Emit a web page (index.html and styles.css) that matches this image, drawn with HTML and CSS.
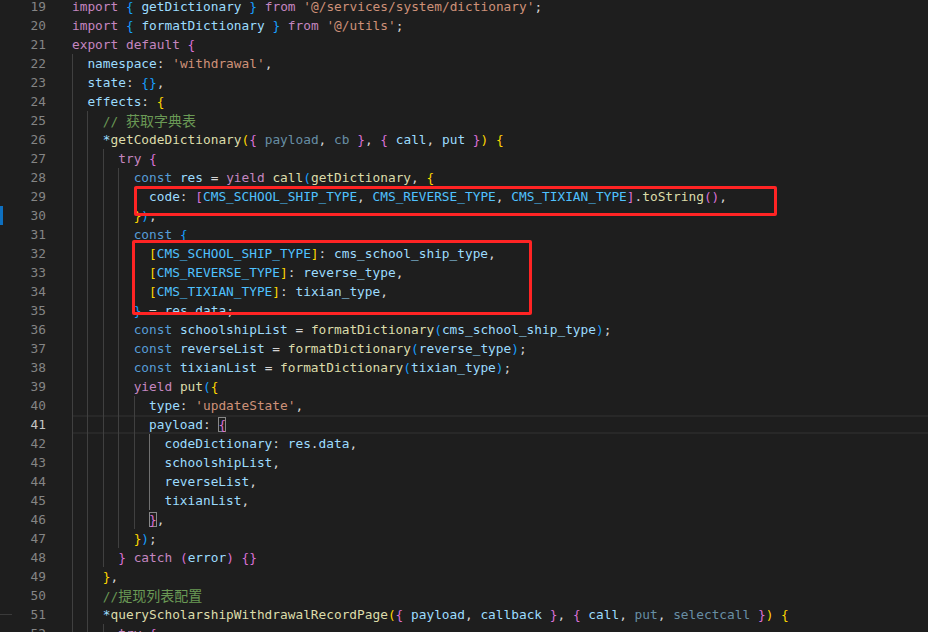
FILE: index.html
```html
<!DOCTYPE html>
<html lang="zh">
<head>
    <meta charset="UTF-8">
    <title>withdrawal.js</title>
    <link rel="stylesheet" href="styles.css">
</head>
<body>
    <div class="editor">
        <div class="strip">
            <div class="mark"></div>
            <div class="rule"></div>
        </div>

        <div class="gutter">
            <div>19</div><div>20</div><div>21</div><div>22</div><div>23</div><div>24</div>
            <div>25</div><div>26</div><div>27</div><div>28</div><div>29</div><div>30</div>
            <div>31</div><div>32</div><div>33</div><div>34</div><div>35</div><div>36</div>
            <div>37</div><div>38</div><div>39</div><div>40</div><div class="active">41</div><div>42</div>
            <div>43</div><div>44</div><div>45</div><div>46</div><div>47</div><div>48</div>
            <div>49</div><div>50</div><div>51</div><div>52</div>
        </div>

        <div class="code">
<div class="ln"><span class="k">import</span> <span class="b3">{</span> <span class="v">getDictionary</span> <span class="b3">}</span> <span class="k">from</span> <span class="st">'@/services/system/dictionary'</span>;</div>
<div class="ln"><span class="k">import</span> <span class="b3">{</span> <span class="v">formatDictionary</span> <span class="b3">}</span> <span class="k">from</span> <span class="st">'@/utils'</span>;</div>
<div class="ln"><span class="k">export</span> <span class="k">default</span> <span class="b2">{</span></div>
<div class="ln"><i class="ig"></i><span class="v">namespace</span>: <span class="st">'withdrawal'</span>,</div>
<div class="ln"><i class="ig"></i><span class="v">state</span>: <span class="b3">{}</span>,</div>
<div class="ln"><i class="ig"></i><span class="v">effects</span>: <span class="b1">{</span></div>
<div class="ln"><i class="ig"></i><i class="ig"></i><span class="cm">// <span class="zh">获取字典表</span></span></div>
<div class="ln"><i class="ig"></i><i class="ig"></i><span class="v">*</span><span class="f">getCodeDictionary</span><span class="b1">(</span><span class="b2">{</span> <span class="u">payload</span>, <span class="u">cb</span> <span class="b2">}</span>, <span class="b2">{</span> <span class="v">call</span>, <span class="v">put</span> <span class="b2">}</span><span class="b1">)</span> <span class="b1">{</span></div>
<div class="ln"><i class="ig"></i><i class="ig"></i><i class="ig"></i><span class="k">try</span> <span class="b2">{</span></div>
<div class="ln"><i class="ig"></i><i class="ig"></i><i class="ig"></i><i class="ig"></i><span class="s">const</span> <span class="v">res</span> = <span class="k">yield</span> <span class="f">call</span><span class="b3">(</span><span class="f">getDictionary</span>, <span class="b1">{</span></div>
<div class="ln"><i class="ig"></i><i class="ig"></i><i class="ig"></i><i class="ig"></i><i class="ig"></i><span class="v">code</span>: <span class="b2">[</span><span class="cn">CMS_SCHOOL_SHIP_TYPE</span>, <span class="cn">CMS_REVERSE_TYPE</span>, <span class="cn">CMS_TIXIAN_TYPE</span><span class="b2">]</span>.<span class="f">toString</span><span class="b2">()</span>,</div>
<div class="ln"><i class="ig"></i><i class="ig"></i><i class="ig"></i><i class="ig"></i><span class="b1">}</span><span class="b3">)</span>;</div>
<div class="ln"><i class="ig"></i><i class="ig"></i><i class="ig"></i><i class="ig"></i><span class="s">const</span> <span class="b3">{</span></div>
<div class="ln"><i class="ig"></i><i class="ig"></i><i class="ig"></i><i class="ig"></i><i class="ig"></i><span class="b1">[</span><span class="cn">CMS_SCHOOL_SHIP_TYPE</span><span class="b1">]</span>: <span class="v">cms_school_ship_type</span>,</div>
<div class="ln"><i class="ig"></i><i class="ig"></i><i class="ig"></i><i class="ig"></i><i class="ig"></i><span class="b1">[</span><span class="cn">CMS_REVERSE_TYPE</span><span class="b1">]</span>: <span class="v">reverse_type</span>,</div>
<div class="ln"><i class="ig"></i><i class="ig"></i><i class="ig"></i><i class="ig"></i><i class="ig"></i><span class="b1">[</span><span class="cn">CMS_TIXIAN_TYPE</span><span class="b1">]</span>: <span class="v">tixian_type</span>,</div>
<div class="ln"><i class="ig"></i><i class="ig"></i><i class="ig"></i><i class="ig"></i><span class="b3">}</span> = <span class="v">res</span>.<span class="v">data</span>;</div>
<div class="ln"><i class="ig"></i><i class="ig"></i><i class="ig"></i><i class="ig"></i><span class="s">const</span> <span class="v">schoolshipList</span> = <span class="f">formatDictionary</span><span class="b3">(</span><span class="v">cms_school_ship_type</span><span class="b3">)</span>;</div>
<div class="ln"><i class="ig"></i><i class="ig"></i><i class="ig"></i><i class="ig"></i><span class="s">const</span> <span class="v">reverseList</span> = <span class="f">formatDictionary</span><span class="b3">(</span><span class="v">reverse_type</span><span class="b3">)</span>;</div>
<div class="ln"><i class="ig"></i><i class="ig"></i><i class="ig"></i><i class="ig"></i><span class="s">const</span> <span class="v">tixianList</span> = <span class="f">formatDictionary</span><span class="b3">(</span><span class="v">tixian_type</span><span class="b3">)</span>;</div>
<div class="ln"><i class="ig"></i><i class="ig"></i><i class="ig"></i><i class="ig"></i><span class="k">yield</span> <span class="f">put</span><span class="b3">(</span><span class="b1">{</span></div>
<div class="ln"><i class="ig"></i><i class="ig"></i><i class="ig"></i><i class="ig"></i><i class="ig"></i><span class="v">type</span>: <span class="st">'updateState'</span>,</div>
<div class="ln current"><i class="ig"></i><i class="ig"></i><i class="ig"></i><i class="ig"></i><i class="ig"></i><span class="v">payload</span>: <span class="b2 match">{</span></div>
<div class="ln"><i class="ig"></i><i class="ig"></i><i class="ig"></i><i class="ig"></i><i class="ig"></i><i class="ig on"></i><span class="v">codeDictionary</span>: <span class="v">res</span>.<span class="v">data</span>,</div>
<div class="ln"><i class="ig"></i><i class="ig"></i><i class="ig"></i><i class="ig"></i><i class="ig"></i><i class="ig on"></i><span class="v">schoolshipList</span>,</div>
<div class="ln"><i class="ig"></i><i class="ig"></i><i class="ig"></i><i class="ig"></i><i class="ig"></i><i class="ig on"></i><span class="v">reverseList</span>,</div>
<div class="ln"><i class="ig"></i><i class="ig"></i><i class="ig"></i><i class="ig"></i><i class="ig"></i><i class="ig on"></i><span class="v">tixianList</span>,</div>
<div class="ln"><i class="ig"></i><i class="ig"></i><i class="ig"></i><i class="ig"></i><i class="ig"></i><span class="b2 match">}</span>,</div>
<div class="ln"><i class="ig"></i><i class="ig"></i><i class="ig"></i><i class="ig"></i><span class="b1">}</span><span class="b3">)</span>;</div>
<div class="ln"><i class="ig"></i><i class="ig"></i><i class="ig"></i><span class="b2">}</span> <span class="k">catch</span> <span class="b2">(</span><span class="v">error</span><span class="b2">)</span> <span class="b2">{}</span></div>
<div class="ln"><i class="ig"></i><i class="ig"></i><span class="b1">}</span>,</div>
<div class="ln"><i class="ig"></i><i class="ig"></i><span class="cm">//<span class="zh">提现列表配置</span></span></div>
<div class="ln"><i class="ig"></i><i class="ig"></i><span class="v">*</span><span class="f">queryScholarshipWithdrawalRecordPage</span><span class="b1">(</span><span class="b2">{</span> <span class="v">payload</span>, <span class="v">callback</span> <span class="b2">}</span>, <span class="b2">{</span> <span class="v">call</span>, <span class="u">put</span>, <span class="u">selectcall</span> <span class="b2">}</span><span class="b1">)</span> <span class="b1">{</span></div>
<div class="ln"><i class="ig"></i><i class="ig"></i><i class="ig"></i><span class="k">try</span> <span class="b2">{</span></div>
        </div>
    </div>

    <!-- red annotation boxes drawn over the code -->
    <div class="note note-code"></div>
    <div class="note note-const"></div>
</body>
</html>
```

FILE: styles.css
```css
* {
    margin: 0;
    padding: 0;
    box-sizing: border-box;
}

html, body {
    width: 100%;
    height: 100%;
    background: #1e1e1e;
    overflow: hidden;
}

body {
    position: relative;
    font-family: "DejaVu Sans Mono", "Liberation Mono", monospace;
    font-size: 12.8px;
    color: #d4d4d4;
}

/* 编辑器主体 */
.editor {
    display: flex;
    margin-top: -3px;
    line-height: 19px;
}

.strip {
    width: 12px;
    flex-shrink: 0;
}
.strip .mark {
    margin-top: 209px;
    width: 3px;
    height: 19px;
    background: #0e70c0;
}
.strip .rule {
    margin-top: 389px;
    height: 1px;
    background: #3a3a3a;
}

.gutter {
    width: 34px;
    flex-shrink: 0;
    text-align: right;
    color: #858585;
}
.gutter .active {
    color: #c6c6c6;
}

.code {
    flex: 1;
    padding-left: 26px;
}
.ln {
    height: 19px;
    white-space: pre;
}
.ln.current {
    box-shadow: inset 0 2px #282828, inset 0 -2px #282828;
}

/* 缩进参考线 */
.ig {
    display: inline-block;
    width: 2ch;
    height: 19px;
    vertical-align: top;
    box-shadow: inset 1px 0 #404040;
}
.ig.on {
    box-shadow: inset 1px 0 #707070;
}

/* 语法高亮 */
.k { color: #c586c0; }
.s { color: #569cd6; }
.v { color: #9cdcfe; }
.cn { color: #4fc1ff; }
.f { color: #dcdcaa; }
.st { color: #ce9178; }
.cm { color: #6a9955; }
.u { color: rgba(156, 220, 254, 0.6); }
.b1 { color: #ffd700; }
.b2 { color: #da70d6; }
.b3 { color: #179fff; }

.zh {
    font-family: "Noto Sans CJK SC", sans-serif;
    font-size: 14px;
}

.match {
    box-shadow: inset 0 0 0 1px #888888;
}

/* 红色标注框 */
.note {
    position: absolute;
    border: 3px solid #ff2424;
    border-radius: 2px;
}
.note-code {
    left: 134px;
    top: 186px;
    width: 643px;
    height: 30px;
}
.note-const {
    left: 132px;
    top: 240px;
    width: 400px;
    height: 75px;
}
```
